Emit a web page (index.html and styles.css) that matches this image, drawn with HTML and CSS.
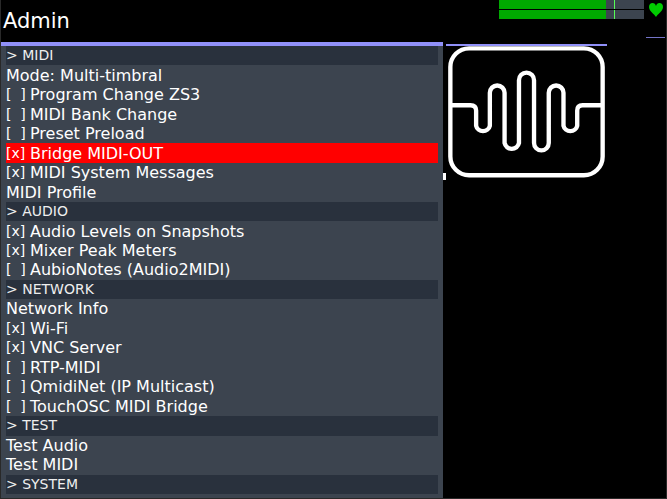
FILE: index.html
```html
<!DOCTYPE html>
<html lang="en">
<head>
    <meta charset="UTF-8">
    <meta name="viewport" content="width=device-width, initial-scale=1.0">
    <title>Admin</title>
    <link rel="stylesheet" href="styles.css">
</head>

<body>
    <div class="screen">
        <header class="topbar">
            <h1 class="title">Admin</h1>
            <div class="status">
                <div class="meter">
                    <div class="bar"><div class="level" style="width: 74%;"></div><div class="hold" style="width: 6%;"></div></div>
                    <div class="bar"><div class="level" style="width: 74%;"></div><div class="hold" style="width: 6%;"></div></div>
                </div>
                <div class="health">
                    <svg class="heart" viewBox="0 0 14 14">
                        <path d="M7 14 C5.500 11 0 8.500 0 4 C0 1.500 1.500 0 3.500 0 C5.300 0 6.500 1.200 7 3 C7.500 1.200 8.700 0 10.500 0 C12.500 0 14 1.500 14 4 C14 8.500 8.500 11 7 14 Z"/>
                    </svg>
                    <div class="load"></div>
                </div>
            </div>
        </header>

        <main class="content">
            <div class="menu">
                <h2 class="group">&gt; MIDI</h2>
                <button class="item" type="button">Mode: Multi-timbral</button>
                <label class="item"><input type="checkbox"><span class="box">[&nbsp;&nbsp;]</span>Program Change ZS3</label>
                <label class="item"><input type="checkbox"><span class="box">[&nbsp;&nbsp;]</span>MIDI Bank Change</label>
                <label class="item"><input type="checkbox"><span class="box">[&nbsp;&nbsp;]</span>Preset Preload</label>
                <label class="item current"><input type="checkbox" checked><span class="box">[x]</span>Bridge MIDI-OUT</label>
                <label class="item"><input type="checkbox" checked><span class="box">[x]</span>MIDI System Messages</label>
                <button class="item" type="button">MIDI Profile</button>
                <h2 class="group">&gt; AUDIO</h2>
                <label class="item"><input type="checkbox" checked><span class="box">[x]</span>Audio Levels on Snapshots</label>
                <label class="item"><input type="checkbox" checked><span class="box">[x]</span>Mixer Peak Meters</label>
                <label class="item"><input type="checkbox"><span class="box">[&nbsp;&nbsp;]</span>AubioNotes (Audio2MIDI)</label>
                <h2 class="group">&gt; NETWORK</h2>
                <button class="item" type="button">Network Info</button>
                <label class="item"><input type="checkbox" checked><span class="box">[x]</span>Wi-Fi</label>
                <label class="item"><input type="checkbox" checked><span class="box">[x]</span>VNC Server</label>
                <label class="item"><input type="checkbox"><span class="box">[&nbsp;&nbsp;]</span>RTP-MIDI</label>
                <label class="item"><input type="checkbox"><span class="box">[&nbsp;&nbsp;]</span>QmidiNet (IP Multicast)</label>
                <label class="item"><input type="checkbox"><span class="box">[&nbsp;&nbsp;]</span>TouchOSC MIDI Bridge</label>
                <h2 class="group">&gt; TEST</h2>
                <button class="item" type="button">Test Audio</button>
                <button class="item" type="button">Test MIDI</button>
                <h2 class="group">&gt; SYSTEM</h2>
            </div>

            <aside class="side">
                <div class="notch"></div>
                <div class="panel">
                    <svg class="logo" viewBox="55 138 469 393">
                        <rect x="62" y="145" width="455" height="379" rx="56"/>
                        <path d="M62 315 H122 Q139 315 139 331 V376 A21 21 0 0 0 180 376 V278 A22 22 0 0 1 224 278 V428 A22 22 0 0 0 267 428 V240 A22 22 0 0 1 312 240 V428 A22 22 0 0 0 356 428 V278 A22 22 0 0 1 400 278 V376 A21 21 0 0 0 441 376 V331 Q441 315 457 315 H517"/>
                    </svg>
                </div>
            </aside>
        </main>
    </div>
    <script>
        var boxes = document.querySelectorAll('.item input');
        for (var i = 0; i < boxes.length; i++) {
            // show the new state between the brackets
            boxes[i].onchange = function () {
                this.nextElementSibling.textContent = this.checked ? '[x]' : '[\u00a0\u00a0]';
            }
        }
    </script>
</body>
</html>
```

FILE: styles.css
```css
* {
    margin: 0;
    padding: 0;
    box-sizing: border-box;
}

body {
    background-color: #000;
    color: #fff;
    font-family: "DejaVu Sans", sans-serif;
    font-size: 16px;
}

.screen {
    display: flex;
    flex-direction: column;
    min-height: 100vh;
    border: 1px solid #292929;
    border-top: 0;
}

/* top bar */
.topbar {
    display: flex;
    justify-content: space-between;
    height: 42px;
}

.title {
    padding: 7px 0 0 2px;
    font-size: 21px;
    line-height: 28px;
    font-weight: normal;
}

.status {
    display: flex;
    gap: 1px;
}

.meter {
    display: flex;
    flex-direction: column;
    gap: 1px;
    width: 145px;
    height: 19px;
}

.bar {
    display: flex;
    flex: 1;
    background-color: #3c444f;
}

.level {
    background-color: #00aa00;
}

.hold {
    border-right: 1px solid #55ff55;
}

.health {
    display: flex;
    flex-direction: column;
    align-items: center;
    justify-content: space-between;
    width: 21px;
    padding: 3px 0 4px;
}

.heart {
    width: 14px;
    height: 14px;
    fill: #00cc00;
}

.load {
    width: 19px;
    height: 1px;
    background-color: #7474c8;
}

/* menu */
.content {
    display: grid;
    grid-template-columns: minmax(0, 1fr) 223px;
    flex: 1;
}

.menu {
    display: grid;
    grid-auto-rows: 1fr;
    padding: 0 5px 4px;
    border-top: 4px solid #9090f8;
    background-color: #3c444f;
}

.group,
.item {
    display: flex;
    align-items: center;
    width: 100%;
    color: #fff;
    font: inherit;
    line-height: 19px;
    text-align: left;
    white-space: nowrap;
}

.group {
    background-color: #29313d;
    color: #eee;
    font-size: 14px;
}

.item {
    border: 0;
    background: none;
    cursor: pointer;
}

.current {
    background-color: #ff0000;
}

.item input {
    appearance: none;
    width: 0;
    height: 0;
}

.box {
    width: 24px;
    font-size: 14px;
}

/* side panel */
.side {
    display: flex;
    padding-top: 2px;
}

.notch {
    width: 3px;
    height: 7px;
    margin-top: 129px;
    background-color: #fff;
}

.panel {
    width: 161px;
    border-top: 2px solid #9090f8;
}

.logo {
    display: block;
    width: 157px;
    margin-left: 2px;
    fill: none;
    stroke: #fff;
    stroke-width: 13;
}
```
